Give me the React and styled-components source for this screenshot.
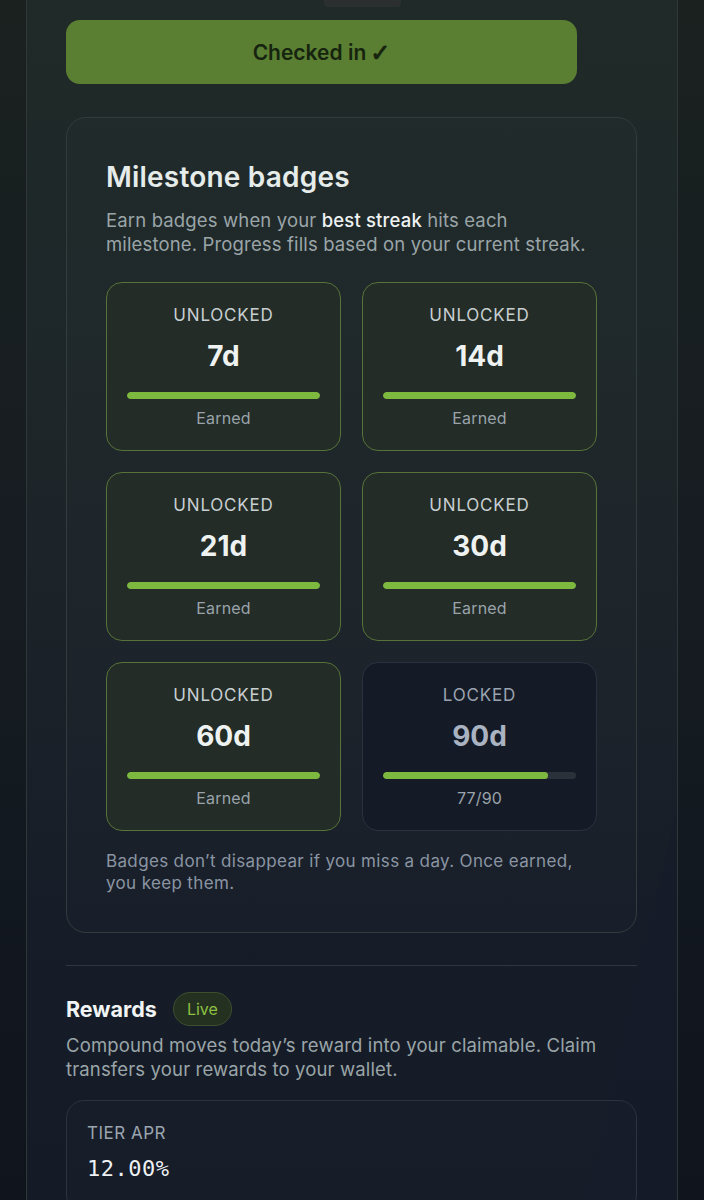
import React from 'react';
import styled, { createGlobalStyle } from 'styled-components';

const GlobalStyle = createGlobalStyle`
  * { box-sizing: border-box; }
  html, body {
    margin: 0;
    padding: 0;
    background: #141a22;
  }
  body {
    font-family: Inter, "Noto Sans", sans-serif;
    -webkit-font-smoothing: antialiased;
  }
`;

const Page = styled.div`
  height: 1200px;
  overflow: hidden;
  padding: 0 26px;
  background: linear-gradient(180deg, #1a211f 0%, #161c22 50%, #0f141d 100%);
`;

const Panel = styled.div`
  min-height: 1200px;
  border-left: 1px solid #2f3838;
  border-right: 1px solid #2f3838;
  padding: 0 40px 0 39px;
  display: flex;
  flex-direction: column;
  background:
    linear-gradient(103deg, rgba(0, 0, 0, 0) 89.8%, rgba(10, 16, 40, 0.12) 90%),
    linear-gradient(180deg, #202a28 0%, #1c2429 45%, #171d28 75%, #151b26 100%);
`;

const TopTab = styled.div`
  align-self: center;
  width: 77px;
  height: 7px;
  margin-left: 21px;
  background: #2b2f30;
  border-radius: 0 0 4px 4px;
`;

const CheckButton = styled.button`
  margin-top: 13px;
  width: 511px;
  height: 64px;
  border: none;
  border-radius: 14px;
  background: #5a7f32;
  color: #16240f;
  font-family: Inter, "DejaVu Sans", sans-serif;
  font-size: 21px;
  font-weight: 600;
  display: flex;
  align-items: center;
  justify-content: center;
  gap: 4px;
  cursor: pointer;
`;

const CheckMark = styled.span`
  font-family: "DejaVu Sans", sans-serif;
  font-size: 24px;
  line-height: 1;
  -webkit-text-stroke: 0.9px #16240f;
  position: relative;
  top: 1px;
`;

const Card = styled.section`
  margin-top: 33px;
  border: 1px solid #323c3d;
  border-radius: 20px;
  padding: 42px 39px 38px;
  background: rgba(255, 255, 255, 0.012);
`;

const Title = styled.h2`
  margin: 0;
  font-size: 28px;
  line-height: 34px;
  font-weight: 600;
  letter-spacing: 0.2px;
  color: #e6ecea;
`;

const Desc = styled.p`
  margin: ${p => p.$top || 0}px 0 0;
  font-size: 18.5px;
  line-height: 24px;
  letter-spacing: 0.15px;
  color: #9aa5a8;

  strong {
    font-weight: 500;
    color: #eef2f1;
  }
`;

const Grid = styled.div`
  margin-top: 26px;
  display: grid;
  grid-template-columns: 1fr 1fr;
  gap: 21px;
`;

const Badge = styled.div`
  height: 169px;
  padding: 22px 20px;
  border-radius: 16px;
  border: 1px solid ${p => (p.$locked ? '#2a3240' : '#56733a')};
  background: ${p => (p.$locked ? '#151b26' : '#232c26')};
  display: flex;
  flex-direction: column;
  align-items: stretch;
  text-align: center;
`;

const BadgeLabel = styled.div`
  font-size: 17px;
  line-height: 20px;
  letter-spacing: 0.8px;
  color: ${p => (p.$locked ? '#9aa3b0' : '#c8cfd2')};
`;

const BadgeValue = styled.div`
  margin-top: 14px;
  font-size: 28px;
  line-height: 34px;
  font-weight: 700;
  color: ${p => (p.$locked ? '#a9b3c2' : '#eef2f1')};
`;

const Track = styled.div`
  margin-top: 19px;
  height: 9px;
  border-radius: 5px;
  background: #2a313b;
  overflow: hidden;
`;

const Fill = styled.div`
  height: 100%;
  border-radius: 5px;
  background: #7db93e;
`;

const BadgeCaption = styled.div`
  margin-top: 9px;
  font-size: 16px;
  line-height: 20px;
  letter-spacing: 0.2px;
  color: #9aa3ab;
`;

const Note = styled.p`
  margin: 19px 0 0;
  font-size: 17px;
  line-height: 22px;
  letter-spacing: 0.35px;
  color: #8a95a3;
`;

const Divider = styled.hr`
  margin: 32px 0 0;
  border: none;
  height: 1px;
  background: #2e3644;
`;

const RewardsHead = styled.div`
  margin-top: 26px;
  display: flex;
  align-items: center;
  gap: 16px;
`;

const RewardsTitle = styled.h3`
  margin: 0;
  font-size: 21.5px;
  font-weight: 700;
  color: #f1f4f4;
`;

const LivePill = styled.span`
  height: 34px;
  padding: 0 13px;
  display: inline-flex;
  align-items: center;
  border-radius: 17px;
  border: 1px solid #3c4f2e;
  background: #243020;
  color: #8cc043;
  font-size: 16px;
`;

const StatCard = styled.div`
  margin-top: 19px;
  border: 1px solid #2b3340;
  border-radius: 18px;
  padding: 22px 20px 30px;
  background: rgba(255, 255, 255, 0.012);
`;

const StatLabel = styled.div`
  font-size: 17px;
  line-height: 20px;
  letter-spacing: 0.5px;
  color: #9ba5b0;
`;

const StatValue = styled.div`
  margin-top: 13px;
  font-family: "DejaVu Sans Mono", "Liberation Mono", monospace;
  font-size: 22px;
  line-height: 26px;
  letter-spacing: 0.5px;
  color: #eef1f4;
`;

const badges = [
  { days: 7, current: 90 },
  { days: 14, current: 90 },
  { days: 21, current: 90 },
  { days: 30, current: 90 },
  { days: 60, current: 90 },
  { days: 90, current: 77 },
];

export default function App() {
  return (
    <>
      <GlobalStyle />
      <Page>
        <Panel>
          <TopTab />
          <CheckButton>
            Checked in<CheckMark>✓</CheckMark>
          </CheckButton>

          <Card>
            <Title>Milestone badges</Title>
            <Desc $top={14}>
              Earn badges when your <strong>best streak</strong> hits each milestone. Progress fills based on your current streak.
            </Desc>

            <Grid>
              {badges.map(b => {
                const locked = b.current < b.days;
                const pct = Math.min(100, (b.current / b.days) * 100);
                return (
                  <Badge key={b.days} $locked={locked}>
                    <BadgeLabel $locked={locked}>{locked ? 'LOCKED' : 'UNLOCKED'}</BadgeLabel>
                    <BadgeValue $locked={locked}>{b.days}d</BadgeValue>
                    <Track>
                      <Fill style={{ width: `${pct}%` }} />
                    </Track>
                    <BadgeCaption>{locked ? `${b.current}/${b.days}` : 'Earned'}</BadgeCaption>
                  </Badge>
                );
              })}
            </Grid>

            <Note>Badges don’t disappear if you miss a day. Once earned, you keep them.</Note>
          </Card>

          <Divider />

          <RewardsHead>
            <RewardsTitle>Rewards</RewardsTitle>
            <LivePill>Live</LivePill>
          </RewardsHead>
          <Desc $top={7}>
            Compound moves today’s reward into your claimable. Claim transfers your rewards to your wallet.
          </Desc>

          <StatCard>
            <StatLabel>TIER APR</StatLabel>
            <StatValue>12.00%</StatValue>
          </StatCard>
        </Panel>
      </Page>
    </>
  );
}
